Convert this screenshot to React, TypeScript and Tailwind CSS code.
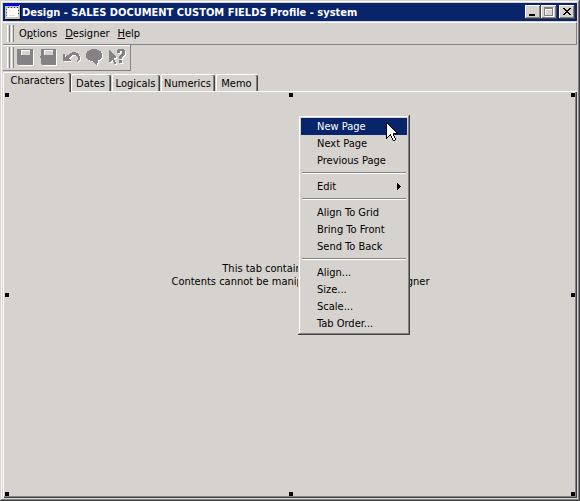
import type { ReactNode } from "react";

const raised =
  "shadow-[inset_-1px_-1px_0_#424142,inset_1px_1px_0_#ffffff,inset_-2px_-2px_0_#848284]";

function Gripper() {
  return (
    <div className="flex gap-px self-stretch py-0.5" aria-hidden="true">
      <span className="w-[3px] border-r border-l border-r-[#848284] border-l-white" />
      <span className="w-[3px] border-r border-l border-r-[#848284] border-l-white" />
    </div>
  );
}

function CaptionButton({ label, disabled, children }: { label: string; disabled?: boolean; children: ReactNode }) {
  return (
    <button type="button" aria-label={label} disabled={disabled} className={`h-3.5 w-4 bg-[#d6d3ce] ${raised}`}>
      <svg width="16" height="14" shapeRendering="crispEdges">
        {children}
      </svg>
    </button>
  );
}

/* Disabled toolbar glyph: a white copy one pixel down and right, the gray one over it. */
function ToolButton({ label, children }: { label: string; children: ReactNode }) {
  return (
    <button type="button" disabled aria-label={label} className="flex h-[23px] w-[23px] items-center justify-center">
      <svg width="19" height="19" shapeRendering="crispEdges">
        <g transform="translate(1 1)" fill="#ffffff">
          {children}
        </g>
        <g fill="#848284">{children}</g>
      </svg>
    </button>
  );
}

const menus = [
  ["O", "p", "tions"],
  ["", "D", "esigner"],
  ["", "H", "elp"],
];

const tabs = [
  { name: "Dates", width: "w-10" },
  { name: "Logicals", width: "w-12" },
  { name: "Numerics", width: "w-[54px]" },
  { name: "Memo", width: "w-[42px]" },
];

const contextGroups = [
  ["New Page", "Next Page", "Previous Page"],
  ["Edit"],
  ["Align To Grid", "Bring To Front", "Send To Back"],
  ["Align...", "Size...", "Scale...", "Tab Order..."],
];

const handles = [
  "left-px top-px",
  "left-1/2 top-px -translate-x-1/2",
  "right-0.5 top-px",
  "left-px top-1/2 -translate-y-1/2",
  "right-0.5 top-1/2 -translate-y-1/2",
  "left-px bottom-0.5",
  "left-1/2 bottom-0.5 -translate-x-1/2",
  "right-0.5 bottom-0.5",
];

function ContextMenu() {
  return (
    <div
      role="menu"
      className="absolute top-[115px] left-[298px] w-28 bg-[#d6d3ce] p-[3px] shadow-[inset_-1px_-1px_0_#424142,inset_1px_1px_0_#d6d3ce,inset_-2px_-2px_0_#848284,inset_2px_2px_0_#ffffff]"
    >
      {contextGroups.map((group, g) => (
        <div key={g}>
          {g > 0 && (
            <div role="separator" className="mx-px mt-[3px] mb-1 h-0.5 border-t border-b border-t-[#848284] border-b-white" />
          )}
          {group.map((item) => (
            <button
              key={item}
              type="button"
              role="menuitem"
              className={`flex h-[17px] w-full items-center justify-between pr-1.5 pl-4 text-left ${
                item === "New Page" ? "bg-[#08246b] text-white" : ""
              }`}
            >
              {item}
              {item === "Edit" && (
                <svg width="4" height="7" shapeRendering="crispEdges" aria-hidden="true">
                  <path d="M0 0h1v1h1v1h1v1h1v1h-1v1h-1v1h-1v1h-1z" />
                </svg>
              )}
            </button>
          ))}
        </div>
      ))}
    </div>
  );
}

function Pointer() {
  return (
    <svg
      width="12"
      height="19"
      shapeRendering="crispEdges"
      aria-hidden="true"
      className="pointer-events-none absolute top-[122px] left-[386px]"
    >
      <path d="M0 0h1v1h1v1h1v1h1v1h1v1h1v1h1v1h1v1h1v1h1v1h1v1h1v1h-4v2h1v2h1v2h-1v1h-2v-1h-1v-2h-1v-2h-2v1h-1v1h-1v1h-1z" />
      <path
        fill="#ffffff"
        d="M1 2h1v1h1v1h1v1h1v1h1v1h1v1h1v1h1v1h1v1h-3v3h1v2h1v2h-2v-2h-1v-2h-1v-2h-1v1h-1v1h-1v1h-1z"
      />
    </svg>
  );
}

export default function App() {
  return (
    <div className="relative flex h-screen flex-col bg-[#d6d3ce] p-[3px] font-['DejaVu_Sans_Condensed','DejaVu_Sans',sans-serif] text-[11px] leading-[13px] whitespace-nowrap text-black shadow-[inset_-1px_-1px_0_#424142,inset_1px_1px_0_#d6d3ce,inset_-2px_-2px_0_#848284,inset_2px_2px_0_#ffffff]">
      <header className="flex h-[18px] shrink-0 items-center bg-[#08246b] px-0.5 text-white">
        <svg width="16" height="16" className="mr-px" shapeRendering="crispEdges" aria-hidden="true">
          <path d="M1 1h15v15H1z" fill="#000000" />
          <path d="M0 1h15v14H0z" fill="#c6c3c6" />
          <path d="M0 0h14v2H0z" fill="#0000ff" />
          <path d="M2 4h11v9H2z" fill="#ffffff" />
          <path d="M3 3h1v1H3zM6 3h1v1H6zM9 3h1v1H9zM12 3h1v1h-1zM13 6h1v1h-1zM13 9h1v1h-1z" fill="#424142" />
          <path d="M1 5h1v1H1zM1 8h1v1H1zM1 11h1v1H1z" fill="#008284" />
          <path d="M4 11h6v1H4zM4 6h1v2H4z" fill="#ffcfce" />
        </svg>
        <h1 className="grow font-bold">Design - SALES DOCUMENT CUSTOM FIELDS Profile - system</h1>
        <CaptionButton label="Minimize">
          <path d="M4 9h6v2H4z" />
        </CaptionButton>
        <CaptionButton label="Maximize" disabled>
          <path d="M4 3h9v9H4z" fill="#ffffff" />
          <path d="M3 2h9v9H3z" fill="#848284" />
          <path d="M4 4h7v6H4z" fill="#ffffff" />
          <path d="M5 5h6v5H5z" fill="#d6d3ce" />
        </CaptionButton>
        <span className="w-0.5" />
        <CaptionButton label="Close">
          <path d="M4 3h2v1h1v1h2v-1h1v-1h2v1h-1v1h-1v1h-1v1h1v1h1v1h1v1h-2v-1h-1v-1h-2v1h-1v1h-2v-1h1v-1h1v-1h1v-1h-1v-1h-1v-1h-1z" />
        </CaptionButton>
      </header>

      <nav className="mt-px flex h-[23px] shrink-0 items-center border-t border-r border-b border-t-white border-r-[#848284] border-b-[#848284] pl-1">
        <Gripper />
        <div className="flex gap-2 pl-[5px]">
          {menus.map(([before, key, after]) => (
            <button key={key} type="button">
              {before}
              <u>{key}</u>
              {after}
            </button>
          ))}
        </div>
      </nav>

      <div role="toolbar" className="flex h-[26px] shrink-0 items-center self-start border-r border-b border-[#848284] pr-px pl-1 shadow-[inset_0_1px_0_#ffffff]">
        <Gripper />
        <ToolButton label="Save">
          <path fillRule="evenodd" d="M1 1h16v16h-15v-1h-1zM5 2v5h9v-5z" />
        </ToolButton>
        <ToolButton label="Save and close">
          <path fillRule="evenodd" d="M2 1h15v16h-14v-1h-1v-6h-1v-2h1zM5 2v5h9v-5z" />
        </ToolButton>
        <ToolButton label="Undo">
          <path d="M1 6h2v3h1v-1h1v-1h2v-1h1v-1h2v-1h4v1h2v1h1v2h1v4h-1v1h-1v1h-1v-2h1v-3h-1v-1h-1v-1h-4v1h-1v1h-1v1h-1v1h1v1h1v1h-8z" />
        </ToolButton>
        <ToolButton label="Notes">
          <path d="M6 1h6v1h2v1h2v2h1v5h-1v1h-1v1h-2v1h-8v-1h-2v-1h-1v-1h-1v-5h1v-2h2v-1h2z" />
          <path d="M8 13h5v2h-1v2h-1v-1h-1v-1h-1v-1h-1z" />
        </ToolButton>
        <ToolButton label="Context help">
          <path d="M1 2h1v1h1v1h1v1h1v1h1v1h1v1h1v2h-2v2h1v2h1v2h-2v-2h-1v-2h-1v1h-1v1h-2z" />
          <path d="M10 1h6v1h1v5h-1v1h-1v1h-1v2h-3v-3h1v-1h1v-1h1v-3h-2v2h-3v-3h1zM11 12h3v3h-3z" />
        </ToolButton>
      </div>

      <div role="tablist" className="mt-px flex h-[19px] shrink-0 items-end">
        <button
          type="button"
          role="tab"
          aria-selected="true"
          className="relative z-10 -mb-px h-5 w-[68px] rounded-t-xs border-t border-l border-white bg-[#d6d3ce] pb-1 shadow-[inset_-1px_0_0_#424142,inset_-2px_0_0_#848284]"
        >
          Characters
        </button>
        {tabs.map((tab) => (
          <button
            key={tab.name}
            type="button"
            role="tab"
            aria-selected="false"
            className={`mr-px h-[17px] rounded-t-xs border-t border-l border-white pr-0.5 shadow-[inset_-1px_0_0_#424142,inset_-2px_0_0_#848284] ${tab.width}`}
          >
            {tab.name}
          </button>
        ))}
      </div>

      <main className="relative flex min-h-0 grow flex-col justify-center border-t border-l border-white pr-0.5 pb-10 pl-[22px] text-center shadow-[inset_-1px_-1px_0_#424142,inset_-2px_-2px_0_#848284]">
        <p>This tab contains system fields.</p>
        <p>Contents cannot be manipulated using the designer</p>
        {handles.map((spot) => (
          <span key={spot} className={`absolute size-1 bg-black ${spot}`} />
        ))}
      </main>

      <ContextMenu />
      <Pointer />
    </div>
  );
}
